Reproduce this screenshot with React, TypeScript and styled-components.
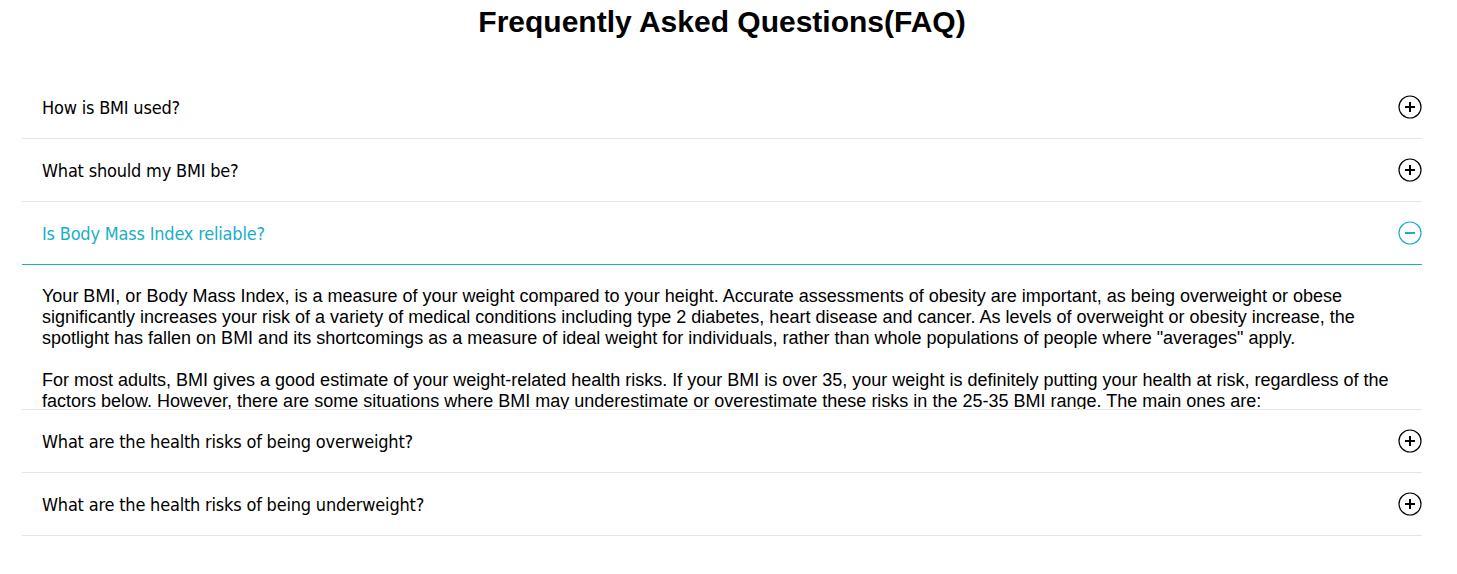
import React, { useState } from "react";
import styled, { createGlobalStyle } from "styled-components";

const Global = createGlobalStyle`
  html, body { margin: 0; padding: 0; background: #fff; }
  body { font-family: "Liberation Sans", Arial, sans-serif; color: #000; }
`;

const Page = styled.div`
  width: 1400px;
  margin: 0 0 0 22px;
`;

const Title = styled.h1`
  margin: 0;
  padding-top: 5px;
  height: 71px;
  text-align: center;
  font-family: "Liberation Sans", Arial, sans-serif;
  font-weight: bold;
  font-size: 30px;
  line-height: 34px;
`;

const Item = styled.div`
  border-bottom: 1px solid #e5e5e5;
`;

const Header = styled.div<{ $open: boolean }>`
  display: flex;
  align-items: center;
  justify-content: space-between;
  height: 62px;
  padding-left: 20px;
  color: ${(p) => (p.$open ? "#1aaec8" : "#000")};
  font-family: "DejaVu Sans Condensed", "DejaVu Sans", Tahoma, sans-serif;
  font-size: 18px;
  letter-spacing: -0.2px;
  cursor: pointer;
`;

const Panel = styled.div`
  height: 123px;
  overflow: hidden;
  padding: 21px 20px 0;
  border-top: 1px solid #1aaec8;
  font-family: "Liberation Sans", Arial, sans-serif;
  font-size: 18px;
  line-height: 21px;
`;

const Para = styled.p`
  margin: 0 0 21px;
`;

const Icon = ({ open }: { open: boolean }) => {
  const c = open ? "#1aaec8" : "#000";
  return (
    <svg width="24" height="24" viewBox="0 0 24 24">
      <circle cx="12" cy="12" r="11" fill="none" stroke={c} strokeWidth="1.2" />
      <line x1="7" y1="12" x2="17" y2="12" stroke={c} strokeWidth="2" />
      {!open && <line x1="12" y1="7" x2="12" y2="17" stroke={c} strokeWidth="2" />}
    </svg>
  );
};

const faqs = [
  "How is BMI used?",
  "What should my BMI be?",
  "Is Body Mass Index reliable?",
  "What are the health risks of being overweight?",
  "What are the health risks of being underweight?",
];

export default function App() {
  const [open, setOpen] = useState(2);
  return (
    <>
      <Global />
      <Page>
        <Title>Frequently Asked Questions(FAQ)</Title>
        {faqs.map((q, i) => (
          <Item key={q}>
            <Header $open={i === open} onClick={() => setOpen(i === open ? -1 : i)}>
              <span>{q}</span>
              <Icon open={i === open} />
            </Header>
            {i === open && (
              <Panel>
                <Para>
                  Your BMI, or Body Mass Index, is a measure of your weight compared to your height. Accurate assessments of obesity are important, as being overweight or obese significantly increases your risk of a variety of medical conditions including type 2 diabetes, heart disease and cancer. As levels of overweight or obesity increase, the spotlight has fallen on BMI and its shortcomings as a measure of ideal weight for individuals, rather than whole populations of people where "averages" apply.
                </Para>
                <Para>
                  For most adults, BMI gives a good estimate of your weight-related health risks. If your BMI is over 35, your weight is definitely putting your health at risk, regardless of the factors below. However, there are some situations where BMI may underestimate or overestimate these risks in the 25-35 BMI range. The main ones are:
                </Para>
              </Panel>
            )}
          </Item>
        ))}
      </Page>
    </>
  );
}
